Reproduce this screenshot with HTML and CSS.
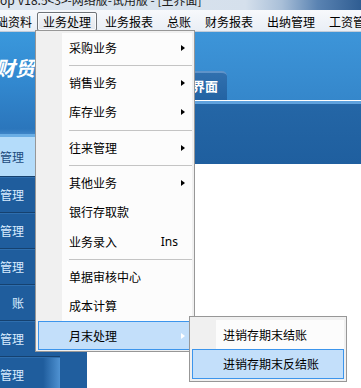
FILE: index.html
```html
<!DOCTYPE html>
<html lang="zh-CN">
<head>
<meta charset="utf-8">
<title>主界面</title>
<link rel="stylesheet" href="styles.css">
</head>
<body>
<div class="window">
  <div class="titlebar"><span class="title">op V18.5&lt;3&gt;-网络版-试用版 - [主界面]</span></div>
  <div class="menubar">
    <span class="mi first">基础资料</span>
    <span class="mi active">业务处理</span>
    <span class="mi">业务报表</span>
    <span class="mi">总账</span>
    <span class="mi">财务报表</span>
    <span class="mi">出纳管理</span>
    <span class="mi">工资管理</span>
  </div>
  <div class="body">
    <aside class="sidebar">
      <div class="logo">财贸</div>
      <div class="stripe"></div>
      <div class="nav selected">管理</div>
      <div class="nav">管理</div>
      <div class="nav">管理</div>
      <div class="nav">管理</div>
      <div class="nav">账</div>
      <div class="nav">管理</div>
      <div class="nav last">管理</div>
    </aside>
    <div class="strip"></div>
    <main class="content">
      <div class="header"><div class="tab">主界面</div></div>
      <div class="whiteline"></div>
      <div class="band"></div>
    </main>
  </div>

  <div class="dropdown">
    <div class="list">
      <div class="item">采购业务<span class="arrow"></span></div>
      <div class="sep"></div>
      <div class="item">销售业务<span class="arrow"></span></div>
      <div class="item">库存业务<span class="arrow"></span></div>
      <div class="sep"></div>
      <div class="item">往来管理<span class="arrow"></span></div>
      <div class="sep"></div>
      <div class="item">其他业务<span class="arrow"></span></div>
      <div class="item">银行存取款</div>
      <div class="item">业务录入<span class="key">Ins</span></div>
      <div class="sep"></div>
      <div class="item">单据审核中心</div>
      <div class="item">成本计算</div>
      <div class="item hot">月末处理<span class="arrow"></span></div>
    </div>
  </div>

  <div class="submenu">
    <div class="list">
      <div class="item">进销存期末结账</div>
      <div class="item hot">进销存期末反结账</div>
    </div>
  </div>
</div>
</body>
</html>
```

FILE: styles.css
```css
html, body {
  margin: 0;
  padding: 0;
}
body {
  width: 361px;
  height: 388px;
  overflow: hidden;
  background: #fff;
  font-family: "Noto Sans CJK SC", "Noto Sans", sans-serif;
  font-size: 12px;
  color: #000;
}
.window {
  position: relative;
  width: 361px;
  height: 388px;
  overflow: hidden;
  display: flex;
  flex-direction: column;
}

/* title bar */
.titlebar {
  height: 10px;
  flex: none;
  overflow: hidden;
  background: linear-gradient(to right, #dce5ef 0%, #d5e0ec 68%, #a9bfd8 78%, #5a83b2 88%, #2f5d92 100%);
}
.title {
  display: block;
  margin-top: -7px;
  line-height: 14px;
  font-size: 12px;
  color: #1b1b1b;
  white-space: nowrap;
}

/* menu bar */
.menubar {
  flex: none;
  height: 22px;
  box-sizing: border-box;
  padding-top: 2px;
  border-bottom: 1px solid #c3ccd8;
  background: linear-gradient(#f7f9fc, #e9eef5);
  display: flex;
  white-space: nowrap;
}
.mi {
  flex: none;
  height: 19px;
  box-sizing: border-box;
  margin: 0 1px;
  padding: 0 5px;
  border: 1px solid transparent;
  border-radius: 2px;
  line-height: 17px;
}
.mi.first {
  margin-left: -22px;
  margin-right: -2px;
}
.mi.active {
  border-color: #6e7277;
  background: linear-gradient(#f3f5f8, #e3e7ed);
  box-shadow: inset 0 0 0 1px rgba(255, 255, 255, 0.7);
}

/* body */
.body {
  flex: 1;
  display: flex;
  min-height: 0;
}
.sidebar {
  flex: none;
  width: 60px;
  display: flex;
  flex-direction: column;
  background: #1f5d9d;
  overflow: hidden;
}
.logo {
  flex: none;
  height: 102px;
  box-sizing: border-box;
  padding-top: 24px;
  line-height: 24px;
  text-indent: -5px;
  white-space: nowrap;
  font-size: 20px;
  font-weight: bold;
  font-style: italic;
  color: #fff;
  background: linear-gradient(#3a98dc, #3288cf 50%, #2b76bc 95%, #3f86c8 100%);
}
.stripe {
  flex: none;
  height: 3px;
  background: #6aaee5;
}
.nav {
  flex: none;
  height: 36px;
  box-sizing: border-box;
  border-top: 1px solid #15416f;
  box-shadow: inset 0 1px 0 #2e6eae;
  background: #1f5d9d;
  color: #d9ecff;
  display: flex;
  justify-content: flex-end;
  align-items: center;
  white-space: nowrap;
  padding-right: 36px;
  font-size: 12px;
  line-height: 16px;
}
.nav.selected {
  height: 39px;
  border-top: none;
  box-shadow: none;
  background: #b4dcfa;
  color: #1b4b7d;
}
.nav.last {
  background: linear-gradient(to right, #1f5d9d 72%, #4f92d2 100%);
}
.strip {
  flex: none;
  width: 27px;
  background: #205e9e;
}
.content {
  flex: 1;
  display: flex;
  flex-direction: column;
  background: #fff;
}
.header {
  flex: none;
  height: 68px;
  display: flex;
  align-items: flex-end;
  background: linear-gradient(#3d95d9, #3587cb);
}
.tab {
  margin-left: 83px;
  height: 29px;
  box-sizing: border-box;
  padding: 0 9px;
  border-top: 2px solid #5f93c9;
  border-radius: 0 5px 0 0;
  background: linear-gradient(#3170ae, #2363a3);
  color: #fff;
  font-size: 13px;
  font-weight: bold;
  line-height: 26px;
}
.whiteline {
  flex: none;
  height: 1px;
  background: #fff;
}
.band {
  flex: none;
  height: 63px;
  background: linear-gradient(#5fa2de 0, #5fa2de 3px, #2466a6 3px, #1f5f9f 100%);
}

/* dropdown menus */
.dropdown, .submenu {
  position: absolute;
  box-sizing: border-box;
  border: 1px solid #979797;
  background: #f0f0f0;
  overflow: hidden;
  white-space: nowrap;
}
.dropdown {
  left: 35px;
  top: 30px;
  width: 160px;
  height: 322px;
  padding: 2px 2px 0;
}
.submenu {
  left: 189px;
  top: 316px;
  width: 158px;
  height: 66px;
  padding: 3px 2px 2px;
}
.list {
  background: linear-gradient(to right, #f0f0f0 0, #f0f0f0 24px, #fcfcfc 24px);
}
.item {
  height: 29.33px;
  box-sizing: border-box;
  border: 1px solid transparent;
  padding-left: 30px;
  display: flex;
  align-items: center;
  line-height: 16px;
}
.item.hot {
  background: #c3dffa;
  border-color: #3c95ec;
}
.arrow {
  margin-left: auto;
  margin-right: 6px;
  width: 0;
  height: 0;
  border-left: 4px solid #000;
  border-top: 3.5px solid transparent;
  border-bottom: 3.5px solid transparent;
}
.item.hot .arrow {
  border-left-color: #fff;
}
.key {
  margin-left: auto;
  margin-right: 13px;
  font-family: "Noto Sans", "Liberation Sans", sans-serif;
}
.sep {
  height: 6px;
  margin-left: 31px;
  background: linear-gradient(transparent 0, transparent 3px, #c4c4c4 3px, #c4c4c4 4px, transparent 4px);
}
```
